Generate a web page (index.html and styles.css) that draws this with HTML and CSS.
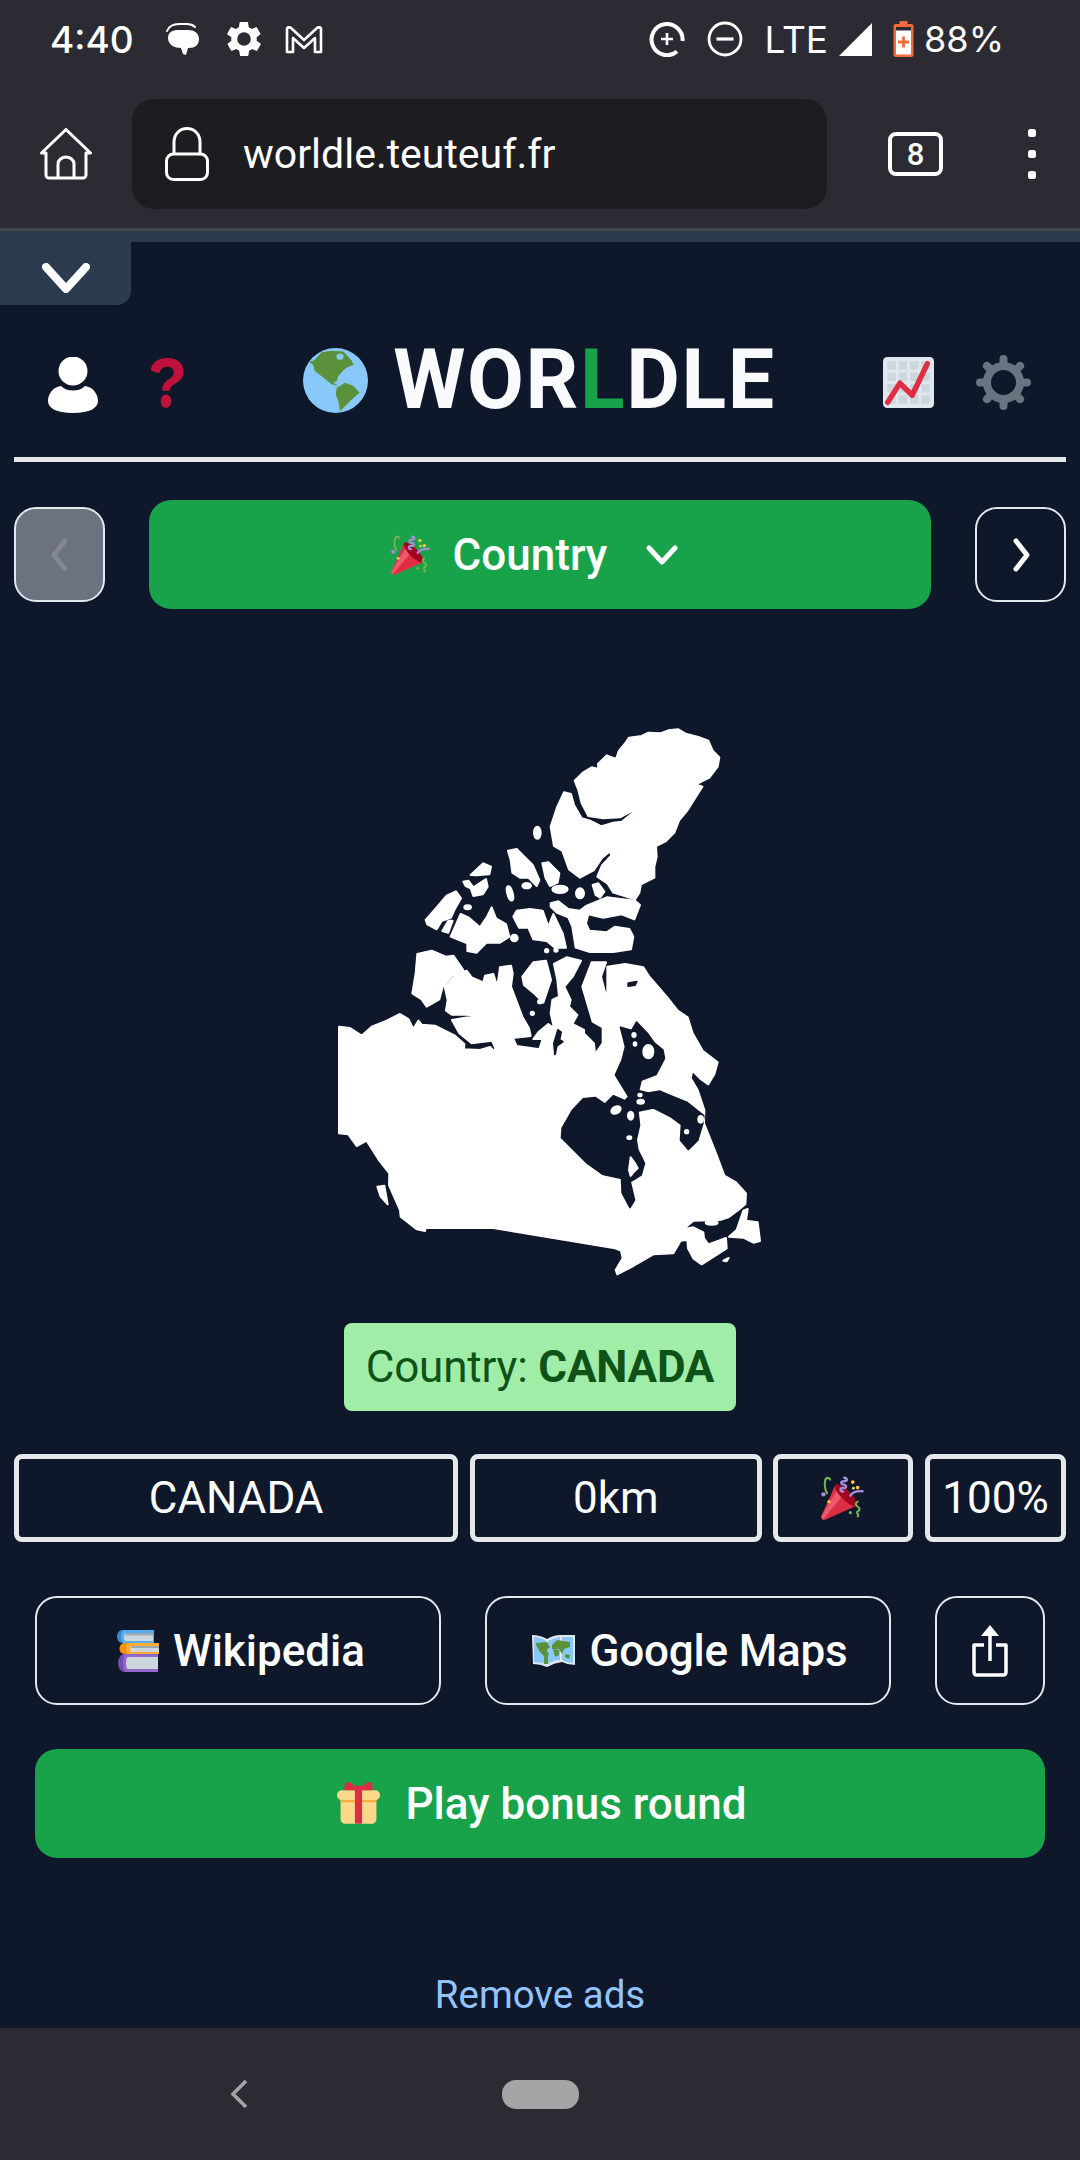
FILE: index.html
```html
<!DOCTYPE html>
<html lang="en">
<head>
<meta charset="utf-8">
<title>Worldle</title>
<link rel="stylesheet" href="styles.css">
</head>
<body>
<svg class="defs" width="0" height="0" aria-hidden="true">
  <symbol id="popper" viewBox="0 0 36 36">
    <path fill="#DD2E44" d="M11.626 7.488c-.112.112-.197.247-.268.395l-.008-.008L.134 33.141l.011.011c-.208.403.14 1.223.853 1.937.713.713 1.533 1.061 1.936.853l.01.01L28.21 24.735l-.008-.009c.147-.07.282-.155.395-.269 1.562-1.562-.971-6.627-5.656-11.313-4.687-4.686-9.752-7.218-11.315-5.656z"/>
    <path fill="#EA596E" d="M13 12L.416 32.506l-.282.635.011.011c-.208.403.14 1.223.853 1.937.232.232.473.408.709.557L17 17l-4-5z"/>
    <path fill="#A0041E" d="M23.012 13.066c4.67 4.672 7.263 9.652 5.789 11.124-1.473 1.474-6.453-1.118-11.126-5.788-4.671-4.672-7.263-9.654-5.79-11.127 1.474-1.473 6.454 1.119 11.127 5.791z"/>
    <path fill="#AA8DD8" d="M18.59 13.478c-.199.161-.459.245-.734.215-.868-.094-1.598-.396-2.109-.873-.541-.505-.808-1.183-.735-1.862.128-1.192 1.324-2.286 3.363-2.066.793.085 1.147-.17 1.159-.292.014-.121-.277-.446-1.07-.532-.868-.094-1.598-.396-2.11-.873-.541-.505-.809-1.183-.735-1.862.13-1.192 1.325-2.286 3.362-2.065.578.062.883-.057 1.012-.134.103-.063.144-.123.148-.158.012-.121-.275-.446-1.07-.532-.549-.06-.947-.552-.886-1.102.059-.549.55-.946 1.101-.886 2.037.219 2.973 1.542 2.844 2.735-.13 1.194-1.325 2.286-3.364 2.067-.578-.063-.88.057-1.01.134-.103.062-.145.123-.149.157-.013.122.276.446 1.071.532 2.037.22 2.973 1.542 2.844 2.735-.129 1.192-1.324 2.286-3.362 2.065-.578-.062-.882.058-1.012.134-.104.064-.144.124-.148.158-.013.121.276.446 1.07.532.548.06.947.553.886 1.102-.028.274-.167.511-.366.671z"/>
    <path fill="none" stroke="#77B255" stroke-width="1.7" stroke-linecap="round" d="M5 14C3 11 3 6 3.500 3.500S7 1 7.500 3M30 21c-2 1-2 3 0 4s2 3 0 4 2 3 0 4"/>
    <path fill="none" stroke="#AA8DD8" stroke-width="2" stroke-linecap="round" d="M24 16c2-3 5-4 10-3.500"/>
    <circle fill="#FFCC4D" cx="26" cy="5" r="1.500"/>
    <circle fill="#FFCC4D" cx="30" cy="9.500" r="1.500"/>
    <circle fill="#FFCC4D" cx="26.500" cy="10" r="1.200"/>
    <circle fill="#AA8DD8" cx="2" cy="15" r="1.800"/>
    <circle fill="#77B255" cx="24" cy="30" r="1.300"/>
    <circle fill="#FFCC4D" cx="6.500" cy="21" r="1.300"/>
  </symbol>
</svg>

<div class="phone">
  <div class="statusbar">
    <span class="clock">4:40</span>
    <svg class="st-chat" viewBox="0 0 34 33"><path fill="#fff" d="M2 15C2 9 7 7 12 7h10c6 0 11 3 11 9 0 6-4 9-10 9h-1l-2 7-3-1-2-6C9 25 2 22 2 15z"/><path fill="none" stroke="#fff" stroke-width="2" stroke-linecap="round" d="M1 8C3 3 8 1 13 1h8c4 0 6 1 8 3"/></svg>
    <svg class="st-gear" viewBox="2 2 20 20"><path fill="#fff" d="M19.400 13c.1-.3.100-.7.100-1s0-.7-.1-1l2.100-1.600c.2-.2.300-.4.100-.7l-2-3.400c-.1-.2-.4-.3-.6-.2l-2.500 1c-.5-.4-1.100-.7-1.700-1l-.4-2.600c0-.3-.2-.5-.5-.5h-4c-.3 0-.5.200-.5.500l-.4 2.600c-.6.300-1.200.6-1.700 1l-2.500-1c-.2-.1-.5 0-.6.200l-2 3.400c-.2.300-.1.500.1.700L4.600 11c-.1.300-.1.700-.1 1s0 .7.100 1l-2.100 1.600c-.2.200-.3.400-.1.700l2 3.400c.1.200.4.300.6.200l2.500-1c.5.400 1.100.7 1.700 1l.4 2.600c0 .3.200.5.500.5h4c.3 0 .5-.2.500-.5l.4-2.600c.6-.3 1.200-.6 1.700-1l2.500 1c.2.100.5 0 .6-.2l2-3.400c.2-.3.100-.5-.1-.7L19.400 13zM12 16a4 4 0 1 1 0-8 4 4 0 0 1 0 8z"/></svg>
    <svg class="st-gmail" viewBox="0 0 38 29"><path fill="none" stroke="#fff" stroke-width="2.600" stroke-linejoin="round" d="M2 27V4c0-2 3-2 4-1l13 12L32 3c1-1 4-1 4 1v23h-6V13L19 23 8 13v14z"/></svg>
    <span class="st-spacer"></span>
    <svg class="st-sync" viewBox="0 0 36 36"><path fill="none" stroke="#fff" stroke-width="4" d="M33.500 20A15.500 15.500 0 1 0 28 30.500"/><path fill="none" stroke="#fff" stroke-width="2.600" d="M18 12v12M12 18h12"/></svg>
    <svg class="st-dnd" viewBox="0 0 36 36"><circle cx="18" cy="18" r="16" fill="none" stroke="#fff" stroke-width="2.800"/><path stroke="#fff" stroke-width="3.200" d="M9.500 18h17"/></svg>
    <span class="st-lte">LTE</span>
    <svg class="st-signal" viewBox="0 0 33 33"><path fill="#fff" d="M33 0v33H0z"/></svg>
    <svg class="st-battery" viewBox="0 0 20 36"><path fill="#f26b3a" d="M6 0h8v3h4c1 0 2 1 2 2v29c0 1-1 2-2 2H2c-1 0-2-1-2-2V5c0-1 1-2 2-2h4z"/><path fill="#fff" d="M2.500 9h15v24.500h-15z"/><path fill="#2c2b33" d="M2.500 6h15v3.500h-15z"/><path fill="#f26b3a" d="M8.600 15.500h2.800v4.100h4.100v2.800h-4.100v4.100H8.600v-4.100H4.500v-2.800h4.100z"/></svg>
    <span class="st-pct">88%</span>
  </div>

  <div class="toolbar">
    <svg class="tb-home" viewBox="0 0 52 52"><path fill="none" stroke="#fff" stroke-width="3" stroke-linejoin="round" d="M1.500 25L26 1.500 50.500 25H46v22a3 3 0 0 1-3 3H9a3 3 0 0 1-3-3V25zM18 50V36c0-4 4-7 8-7s8 3 8 7v14"/></svg>
    <div class="urlbar">
      <svg class="tb-lock" viewBox="0 0 44 54"><path fill="none" stroke="#fff" stroke-width="3" d="M9 27V15C9 7 15 1.500 22 1.500S35 7 35 15v12"/><rect x="1.500" y="27" width="41" height="25.500" rx="7" fill="none" stroke="#fff" stroke-width="3"/></svg>
      <span class="url">worldle.teuteuf.fr</span>
    </div>
    <span class="tabcount">8</span>
    <div class="menu-dots"><i></i><i></i><i></i></div>
  </div>

  <main class="page">
    <div class="collapse-tab">
      <svg class="tab-chev" viewBox="0 0 48 30"><path fill="none" stroke="#fff" stroke-width="8" stroke-linecap="round" stroke-linejoin="round" d="M4 4l20 22L44 4"/></svg>
    </div>

    <header class="header">
      <div class="hd-left">
        <svg class="ic-user" viewBox="0 0 50 56"><ellipse cx="25" cy="14" rx="14.500" ry="14.500" fill="#fff"/><path fill="#fff" d="M13 29c3 3 7 4.500 12 4.500S34 32 37 29c8 1 13 8 13 15 0 7-8 12-25 12S0 51 0 44c0-7 5-14 13-15z"/></svg>
        <svg class="ic-help" viewBox="0 0 35 52"><path fill="#be123c" d="M18 0C7 0 1 5 0 13l9 3c1-4 4-7 8-7 4 0 7 2 7 6 0 3-2 5-5 7-5 3-7 6-7 12h8c0-4 2-5 5-7 5-3 9-6 9-13C34 5 27 0 18 0z"/><ellipse cx="16" cy="45" rx="5.500" ry="7" fill="#be123c"/></svg>
      </div>
      <div class="brand">
        <svg class="ic-globe" viewBox="0 0 36 36"><circle cx="18" cy="18" r="18" fill="#88C9F9"/><path fill="#5C913B" d="M3.200 7.500L6 7.100l4.300-4.700 5.600-.9 6.500.4L27 7.100l1 2.200-3.800 1.500L22 12.700l-2.400 2.800-.9 2.800-1.900.9 2.800 1.900-3.700-1-4.700-3.700-4.700-3.700-.9-3.400zM18.700 22l4.600-2.800 4.700 1.900 3.300 3.700-4.300 3.700-2.800 2.800-3.700 3.700-.9-5.600-1.500-3.700z"/><ellipse cx="20.500" cy="4.800" rx="2" ry="1.700" fill="#88C9F9"/></svg>
        <h1 class="title">WOR<span class="title-l">L</span>DLE</h1>
      </div>
      <div class="hd-right">
        <svg class="ic-chart" viewBox="0 0 36 36"><rect width="36" height="36" rx="3" fill="#E1E8ED"/><path fill="#CCD6DD" d="M3 3h6v6H3zM11 3h6v6h-6zM19 3h6v6h-6zM27 3h6v6h-6zM3 11h6v6H3zM11 11h6v6h-6zM19 11h6v6h-6zM27 11h6v6h-6zM3 19h6v6H3zM11 19h6v6h-6zM19 19h6v6h-6zM27 19h6v6h-6zM3 27h6v6H3zM11 27h6v6h-6zM19 27h6v6h-6zM27 27h6v6h-6z"/><path fill="none" stroke="#DD2E44" stroke-width="3.800" stroke-linecap="round" stroke-linejoin="round" d="M3.300 32l8.600-13.600L20.600 27l10.700-22.300"/></svg>
        <svg class="ic-gear" viewBox="0 0 55 55"><circle cx="27.500" cy="27.500" r="16.500" fill="none" stroke="#66757F" stroke-width="8"/><path fill="none" stroke="#66757F" stroke-width="8" stroke-linecap="round" d="M27.500 8V4M27.500 47v4M8 27.500H4M47 27.500h4M41.600 13.400l2.500-2.500M13.400 13.400l-2.500-2.500M41.600 41.600l2.500 2.500M13.400 41.600l-2.500 2.500"/></svg>
      </div>
    </header>

    <nav class="game-nav">
      <button class="nav-side nav-disabled"><svg class="side-chev" viewBox="0 0 20 34"><path fill="none" stroke="#83878e" stroke-width="5" stroke-linecap="round" stroke-linejoin="round" d="M15 3L4 17l11 14"/></svg></button>
      <button class="nav-main">
        <svg class="emoji-popper"><use href="#popper"/></svg>
        <span>Country</span>
        <svg class="main-chev" viewBox="0 0 32 20"><path fill="none" stroke="#fff" stroke-width="5" stroke-linecap="round" stroke-linejoin="round" d="M3 3l13 14L29 3"/></svg>
      </button>
      <button class="nav-side"><svg class="side-chev" viewBox="0 0 20 34"><path fill="none" stroke="#fff" stroke-width="5" stroke-linecap="round" stroke-linejoin="round" d="M5 3l11 14L5 31"/></svg></button>
    </nav>

    <div class="map-wrap">
      <svg class="map" viewBox="310 710 460 580">
        <g class="land" transform="translate(320 710) scale(.33333)">
          <path d="M764 212L790 187 815 172 835 177 834 162 860 136 888 147 897 122 914 102 927 83 965 78 985 68 1020 70 1045 61 1075 58 1100 72 1135 81 1165 92 1178 122 1198 142 1193 170 1168 203 1128 223 1147 230 1128 260 1103 300 1078 330 1063 368 1038 393 1008 408 1010 440 1003 470 1003 503 963 523 958 548 945 568 880 548 862 520 832 500 846 466 874 436 840 350 880 338 905 335 945 304 957 292 900 322 850 325 805 318 785 280 775 240z"/>
          <path d="M692 350L712 290 732 247 753 252 762 285 785 325 810 332 842 348 868 425 845 445 822 480 780 503 747 478 727 423 702 408 697 380z"/>
          <path d="M692 580L715 574 745 597 780 602 800 587 860 562 945 572 960 585 943 628 905 613 850 623 805 613 798 640 808 662 860 667 885 650 928 657 940 680 933 718 880 726 810 726 767 713 757 650 745 622 710 608 692 590z"/>
          <path d="M818 525L835 520 853 545 840 563 827 555z"/>
          <path d="M564 422L590 417 610 437 638 465 658 510 650 528 625 503 600 503 577 488 572 450z"/>
          <path d="M667 460L685 457 718 490 713 518 690 528 677 505z"/>
          <path d="M452 495L490 460 513 470 508 493 470 496z"/>
          <path d="M430 515L445 512 460 532 498 507 503 530 488 553 460 558 452 535 437 528z"/>
          <path d="M317 630L350 592 380 557 408 544 423 565 403 600 393 623 365 633 350 658 322 643z"/>
          <path d="M367 663L385 632 398 632 385 668z"/>
          <path d="M392 680L422 612 445 622 480 652 500 622 515 592 528 625 558 642 568 680 540 698 500 698 470 728 442 723 442 700z"/>
          <path d="M580 620L590 602 630 597 668 602 685 650 700 612 728 670 738 713 705 713 680 693 640 688 625 653 597 653z"/>
          <path d="M607 800L640 757 678 752 688 790 693 810 670 878 640 848 612 825z"/>
          <path d="M292 732L335 722 378 740 400 737 430 780 395 798 368 830 358 868 320 890 305 868 277 850 287 790z"/>
          <ellipse cx="652" cy="368" rx="10" ry="18"/>
          <ellipse cx="620" cy="527" rx="13" ry="8"/>
          <ellipse cx="720" cy="538" rx="23" ry="11"/>
          <ellipse cx="780" cy="550" rx="12" ry="15"/>
          <ellipse cx="570" cy="550" rx="8" ry="22" transform="rotate(-15 570 550)"/>
          <ellipse cx="443" cy="592" rx="10" ry="6"/>
          <ellipse cx="583" cy="684" rx="10" ry="10"/>
          <circle cx="680" cy="722" r="5"/>
          <circle cx="708" cy="720" r="5"/>
        </g>
        <g class="land" transform="translate(320 1000) scale(.33333)">
          <path d="M57 80L90 84 125 107 155 80 200 62 240 42 265 57 280 87 295 62 305 74 345 77 405 107 433 132 432 148 480 150 510 141 522 153 526 145 516 122 455 130 418 100 396 60 466 48 440 44 395 44 378 32 383 0 374 -40 410 -78 440 -88 455 -68 490 -53 495 -73 520 -78 532 -40 540 -98 573 -103 578 -80 573 -40 592 10 607 50 627 85 632 108 585 113 577 110 590 138 658 148 668 117 640 117 655 97 685 72 702 85 692 40 697 0 717 -10 712 -60 702 -108 740 -128 783 -118 758 -70 733 -40 752 0 747 20 772 45 757 72 792 90 792 100 822 130 825 163 848 130 848 82 818 65 787 -40 815 -113 858 -113 843 -70 852 -35 862 0 862 -100 915 -108 970 -98 988 -70 1040 -10 1073 32 1103 52 1118 100 1148 152 1193 187 1183 223 1165 253 1142 237 1117 212 1112 235 1133 270 1153 330 1152 370 1188 460 1213 527 1248 547 1278 580 1276 613 1255 630 1225 652 1200 660 1120 662 1090 688 1120 682 1150 697 1152 715 1165 733 1218 714 1220 745 1145 793 1120 775 1104 745 1102 720 1082 722 1060 760 1000 763 940 798 892 823 887 810 908 775 903 752 885 745 520 684 317 684 315 693 290 688 242 650 240 630 207 555 208 520 178 482 140 422 110 438 85 403 57 400z"/>
          <path d="M1227 710L1250 690 1270 632 1283 627 1278 662 1313 667 1320 723 1300 728 1270 713z"/>
          <path d="M172 560L193 557 203 613 182 590z"/>
          <path class="water" d="M725 413L800 488 850 523 905 535 907 578 930 622 943 600 930 545 963 525 973 490 953 450 948 420 958 375 953 333 1000 323 1050 348 1085 373 1082 420 1105 448 1133 420 1148 370 1151 347 1100 307 1050 287 1020 274 985 280 955 272 963 240 1008 223 1033 175 1028 150 1003 130 983 102 950 67 935 92 902 82 917 140 907 180 887 225 927 290 915 303 880 288 855 313 825 293 790 297 757 332 727 385z"/>
          <path class="water" d="M714 90L723 97 718 120 728 125 710 138 705 163 702 130z"/>
          <path class="water" d="M925 -50L950 -55 945 -45 925 -42z"/>
          <ellipse cx="888" cy="330" rx="15" ry="10" transform="rotate(-30 888 330)"/>
          <ellipse cx="932" cy="347" rx="8" ry="12"/>
          <ellipse cx="962" cy="305" rx="10" ry="6"/>
          <ellipse cx="960" cy="285" rx="5" ry="4"/>
          <ellipse cx="928" cy="413" rx="6" ry="4"/>
          <path d="M932 472L945 490 953 505 942 515 932 528 927 510z"/>
          <ellipse cx="985" cy="155" rx="15" ry="20"/>
          <ellipse cx="942" cy="105" rx="5" ry="6"/>
          <ellipse cx="945" cy="132" rx="4" ry="5"/>
          <ellipse cx="1142" cy="358" rx="7" ry="10"/>
          <ellipse cx="1100" cy="395" rx="5" ry="5"/>
          <ellipse cx="637" cy="40" rx="5" ry="5"/>
          <ellipse cx="660" cy="5" rx="6" ry="5"/>
          <ellipse cx="1175" cy="668" rx="18" ry="6"/>
          <path d="M1210 782L1226 774 1220 784z"/>
          <ellipse class="water" cx="1190" cy="712" rx="7" ry="4"/>
        </g>
      </svg>
    </div>

    <div class="answer">Country:&nbsp;<strong>CANADA</strong></div>

    <div class="guess-row">
      <div class="cell">CANADA</div>
      <div class="cell">0km</div>
      <div class="cell"><svg class="emoji-popper"><use href="#popper"/></svg></div>
      <div class="cell">100%</div>
    </div>

    <div class="link-row">
      <a class="link-btn link-wide">
        <svg class="emoji-books" viewBox="0 0 42 42"><path fill="#744EAA" d="M1 33c0-5 3-9 6-9h34v18H7c-3 0-6-4-6-9z"/><path fill="#9266CC" d="M9 24h32v18H9c-2 0-3-4-3-9s1-9 3-9z"/><path fill="#CCD6DD" d="M11 27h30v12H11c-1 0-2-2-2-6s1-6 2-6z"/><path fill="#F4900C" d="M2.500 18.500c0-3 2-5.500 5-5.500H42v11H7.500c-3 0-5-2.500-5-5.500z"/><path fill="#FFAC33" d="M12 13h30v11H12c-2 0-3-2-3-5.500s1-5.500 3-5.500z"/><path fill="#CCD6DD" d="M15 16h27v6H15c-1 0-2-1-2-3s1-3 2-3z"/><path fill="#99AAB5" d="M15 16h27v2H14z"/><path fill="#3B88C3" d="M0 6.500C0 3 2 0 5 0h32v13H5c-3 0-5-3-5-6.500z"/><path fill="#55ACEE" d="M7 0h30v13H7C5 13 4 10 4 6.500S5 0 7 0z"/><path fill="#CCD6DD" d="M9 3h27v8H9c-1 0-2-1-2-4s1-4 2-4z"/><path fill="#99AAB5" d="M9 3h27v2.500H8z"/></svg>
        <span>Wikipedia</span>
      </a>
      <a class="link-btn link-wide link-maps">
        <svg class="emoji-map" viewBox="0 0 44 36"><path fill="#E1E8ED" d="M0 2q8 0 15 4 7-4 13-4 8 0 15 0v30q-7 0-13-3-8 1-15 5-7-3-14-3z"/><path fill="#88C9F9" d="M2 4q7 0 12 4v23q-6-2-12-2zM16 8q6-3 12-4v23q-6 0-12 4zM30 4h11v26q-6 0-11-3z"/><path fill="#5C913B" d="M4 10l11-1 3 5-3 3 2 5-4 2-5-5-4-7zM12 24l4-2v9h-4zM20 12l5-5 13 2v5l-6 2-2 5-3-5-7 0zM21 16l6 1v5l-4 2zM33 21l5 1-1 4-4-2z"/></svg>
        <span>Google Maps</span>
      </a>
      <a class="link-btn link-share">
        <svg class="ic-share" viewBox="0 0 36 52"><path fill="none" stroke="#fff" stroke-width="3.500" stroke-linejoin="round" d="M18 36V4"/><path fill="#fff" d="M18 0l9 11H9z"/><path fill="none" stroke="#fff" stroke-width="3.500" stroke-linejoin="round" d="M12 20H2v27c0 2 1 3 3 3h26c2 0 3-1 3-3V20H24"/></svg>
      </a>
    </div>

    <button class="bonus">
      <svg class="emoji-gift" viewBox="0 0 36 36"><path fill="#FDD888" d="M33 31c0 2.200-1.800 4-4 4H7c-2.200 0-4-1.800-4-4V14c0-2.200 1.800-4 4-4h22c2.200 0 4 1.800 4 4v17z"/><path fill="#FDD888" d="M36 11c0 2.200-1.800 4-4 4H4c-2.200 0-4-1.800-4-4s1.800-4 4-4h28c2.200 0 4 1.800 4 4z"/><path fill="#FCAB40" d="M3 15h30v2H3z"/><path fill="#DA2F47" d="M19 3h-2c-1.100 0-2 .9-2 2v29c0 1.100.9 1 2 1h2c1.100 0 2 .1 2-1V5c0-1.100-.9-2-2-2z"/><path fill="#DA2F47" d="M16 7c1.100 0 1.100-.9.5-2S13 2 12 1 9 0 8 0c-1 1-2 3-2 5-.5 1.400.9 2 2 2h8zM20 7c-1.100 0-1.100-.9-.5-2s3.500-3 4.500-4 3-1 4-1c1 1 2 3 2 5 .5 1.400-.9 2-2 2h-8z"/></svg>
      <span>Play bonus round</span>
    </button>

    <a class="remove-ads">Remove ads</a>
  </main>

  <footer class="navbar">
    <svg class="nav-back" viewBox="0 0 18 28"><path fill="none" stroke="#a5a5a7" stroke-width="3.500" d="M16 1L3 14l13 13"/></svg>
    <span class="nav-pill"></span>
  </footer>
</div>
</body>
</html>
```
FILE: styles.css
```css
* { box-sizing: border-box; }
html, body { margin: 0; padding: 0; }
body { width: 1080px; height: 2160px; overflow: hidden; background: #0f172a; font-family: Roboto, "Noto Sans", sans-serif; color: #fff; }
.defs { position: absolute; }
svg { display: block; flex: none; }
.phone { display: flex; flex-direction: column; height: 2160px; }

.statusbar { height: 78px; background: #2c2b33; display: flex; align-items: center; padding: 0 76px 0 50px; font-family: Inter, Roboto, sans-serif; }
.clock { font-size: 37px; font-weight: 500; width: 116px; }
.st-chat { width: 34px; height: 33px; }
.st-gear { width: 34px; height: 34px; margin-left: 27px; }
.st-gmail { width: 38px; height: 29px; margin-left: 24px; }
.st-spacer { flex: 1; }
.st-sync { width: 36px; height: 36px; }
.st-dnd { width: 36px; height: 36px; margin-left: 22px; }
.st-lte { font-size: 37px; font-weight: 400; margin-left: 22px; }
.st-signal { width: 33px; height: 33px; margin-left: 11px; }
.st-battery { width: 21px; height: 36px; margin-left: 21px; }
.st-pct { font-size: 36px; font-weight: 400; margin-left: 10px; }

.toolbar { height: 153px; background: #2c2b33; border-bottom: 3px solid #45444c; display: flex; align-items: center; padding: 2px 0 0 40px; }
.tb-home { width: 52px; height: 52px; }
.urlbar { width: 695px; height: 110px; margin-left: 40px; background: #1d1c21; border-radius: 22px; display: flex; align-items: center; padding-left: 33px; }
.tb-lock { width: 44px; height: 54px; }
.url { font-size: 41px; margin-left: 34px; }
.tabcount { width: 55px; height: 44px; margin-left: 61px; border: 4px solid #fff; border-radius: 8px; display: flex; align-items: center; justify-content: center; font-size: 31px; font-weight: 500; }
.menu-dots { display: flex; flex-direction: column; gap: 13px; margin-left: 85px; }
.menu-dots i { display: block; width: 8px; height: 8px; border-radius: 2.500px; background: #fff; }

.page { position: relative; flex: 1; overflow: hidden; border-top: 11px solid #2d3b4e; padding: 61px 14px 0; background: #0f172a; }
.collapse-tab { position: absolute; left: 0; top: -11px; width: 131px; height: 74px; background: #2d3b4e; border-radius: 0 0 14px 0; display: flex; align-items: center; justify-content: center; padding-top: 20px; }
.tab-chev { width: 48px; height: 30px; }

.header { height: 159px; border-bottom: 5px solid #e5e7eb; display: grid; grid-template-columns: 1fr auto 1fr; align-items: center; padding: 0 35px 0 34px; }
.hd-left { display: flex; align-items: center; gap: 52px; padding-top: 5px; }
.hd-right { display: flex; align-items: center; justify-content: flex-end; gap: 42px; padding-top: 5px; }
.ic-user { width: 50px; height: 56px; margin-top: 4px; }
.ic-help { width: 35px; height: 50px; }
.ic-chart { width: 51px; height: 51px; }
.ic-gear { width: 55px; height: 55px; }
.brand { display: flex; align-items: center; gap: 25px; }
.ic-globe { width: 65px; height: 65px; }
.title { margin: 0; font-size: 82.500px; font-weight: 700; letter-spacing: 1.600px; line-height: 1; color: #f8fafc; }
.title-l { color: #16a34a; }

.game-nav { display: flex; align-items: center; justify-content: space-between; margin-top: 38px; }
button { font-family: inherit; color: inherit; }
.nav-side { width: 91px; height: 95px; padding: 0; background: transparent; border: 2.750px solid #e5e7eb; border-radius: 22px; display: flex; align-items: center; justify-content: center; }
.nav-disabled { background: #6b7280; }
.side-chev { width: 20px; height: 34px; }
.nav-main { width: 782px; height: 109px; background: #18a34b; border: 0; border-radius: 22px; display: flex; align-items: center; justify-content: center; font-size: 44px; font-weight: 500; padding: 0 11px 0 0; }
.nav-main span { margin-left: 22px; }
.main-chev { width: 32px; height: 20px; margin-left: 39px; }
.emoji-popper { width: 40px; height: 40px; }

.map-wrap { display: flex; justify-content: center; margin-top: 101px; }
.map { width: 460px; height: 580px; }
.land { fill: #fff; stroke: #fff; stroke-width: 6; stroke-linejoin: round; }
.land .water { fill: #0f172a; stroke: #0f172a; }

.answer { width: 392px; height: 88px; margin: 33px auto 0; background: #a0eda8; border-radius: 8px; color: #0f5218; font-size: 44px; letter-spacing: -.2px; display: flex; align-items: center; justify-content: center; white-space: nowrap; }
.answer strong { font-weight: 700; }

.guess-row { display: grid; grid-template-columns: 444fr 292fr 140fr 141fr; gap: 11.500px; margin-top: 43px; }
.cell { height: 88px; border: 5.500px solid #e5e7eb; border-radius: 8px; display: flex; align-items: center; justify-content: center; font-size: 44px; }
.cell .emoji-popper { width: 44px; height: 44px; }

.link-row { display: flex; gap: 44px; margin: 54px 20px 0 21px; }
.link-btn { height: 109px; border: 2.750px solid #e5e7eb; border-radius: 22px; display: flex; align-items: center; justify-content: center; font-size: 44px; font-weight: 500; }
.link-wide { flex: 0 0 406px; gap: 14px; padding-left: 6px; }
.link-maps { letter-spacing: -.2px; padding-left: 3px; }
.link-share { width: 110px; }
.emoji-books { width: 42px; height: 42px; }
.emoji-map { width: 44px; height: 36px; }
.ic-share { width: 36px; height: 52px; }

.bonus { display: flex; align-items: center; justify-content: center; gap: 25px; width: 1010px; height: 109px; margin: 44px 20px 0 21px; padding: 0 0 0 4px; background: #18a34b; border: 0; border-radius: 22px; font-size: 44px; font-weight: 500; }
.emoji-gift { width: 43px; height: 43px; }

.remove-ads { display: block; text-align: center; margin-top: 112px; font-size: 38.500px; line-height: 50px; color: #93c5fd; }

.navbar { height: 132px; background: #2c2b33; display: flex; align-items: center; padding-left: 230px; }
.nav-back { width: 18px; height: 28px; }
.nav-pill { width: 77px; height: 29px; margin-left: 254px; background: #a5a5a7; border-radius: 14px; }
```
